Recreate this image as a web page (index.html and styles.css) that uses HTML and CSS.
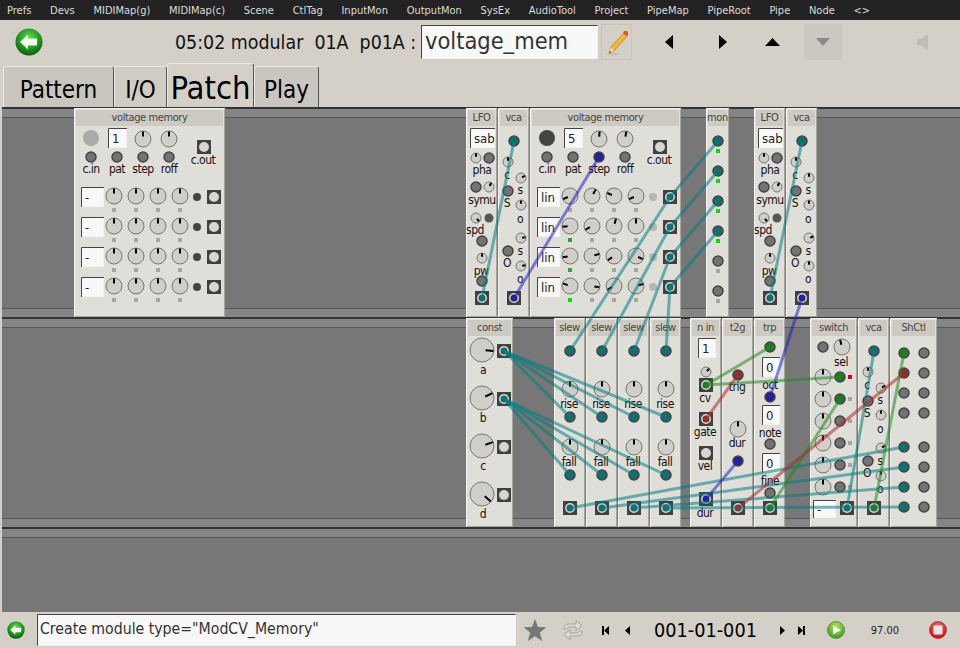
FILE: index.html
```html
<!DOCTYPE html>
<html lang="en">
<head>
    <meta charset="UTF-8">
    <title>modular patch</title>
    <link rel="stylesheet" href="styles.css">
</head>
<body>
    <nav class="menubar">
        <span>Prefs</span><span>Devs</span><span>MIDIMap(g)</span><span>MIDIMap(c)</span><span>Scene</span><span>CtlTag</span><span>InputMon</span><span>OutputMon</span><span>SysEx</span><span>AudioTool</span><span>Project</span><span>PipeMap</span><span>PipeRoot</span><span>Pipe</span><span>Node</span><span>&lt;&gt;</span>
    </nav>

    <div class="toolbar">
        <svg class="icon-back" width="28" height="28" viewBox="0 0 28 28">
            <defs>
                <radialGradient id="green-ball" cx="50%" cy="35%" r="65%">
                    <stop offset="0" stop-color="#6fd85a"/>
                    <stop offset="0.6" stop-color="#1f9a1f"/>
                    <stop offset="1" stop-color="#0a5c12"/>
                </radialGradient>
            </defs>
            <circle cx="14" cy="14" r="13.5" fill="url(#green-ball)"/>
            <path d="M5 14 L13 6.5 L13 10.5 L22 10.5 L22 17.5 L13 17.5 L13 21.5 Z" fill="#f4f8f0"/>
        </svg>
        <div class="title">05:02 modular  01A  p01A :</div>
        <div class="name-box">voltage_mem</div>
        <div class="pencil-btn">
            <svg width="24" height="28" viewBox="0 0 24 28">
                <path d="M20 4 L23 7 L9 23 L4 25 L6 19 Z" fill="#f5b82e" stroke="#a8741a" stroke-width="0.7"/>
                <path d="M19 3 L22 3 L23.5 6 L21 8 L18 5 Z" fill="#e8502a"/>
                <path d="M6 19 L9 23 L4 25 Z" fill="#e9d8b0"/>
                <path d="M4 25 L5 23 L6 24.5 Z" fill="#333"/>
                <path d="M2 26 L14 26" stroke="#b0aca4" stroke-width="1"/>
            </svg>
        </div>
        <svg class="nav-left" width="10" height="14" viewBox="0 0 10 14"><path d="M9 0 V14 L1 7 Z"/></svg>
        <svg class="nav-right" width="10" height="14" viewBox="0 0 10 14"><path d="M1 0 V14 L9 7 Z"/></svg>
        <svg class="nav-up" width="16" height="10" viewBox="0 0 16 10"><path d="M0 9 H15 L7.5 1 Z"/></svg>
        <div class="nav-down">
            <svg width="16" height="10" viewBox="0 0 16 10"><path d="M1 1 H15 L8 9 Z"/></svg>
        </div>
        <svg class="speaker" width="12" height="16" viewBox="0 0 12 16"><path d="M0 5 H4 L11 0 V16 L4 11 H0 Z"/></svg>
    </div>

    <div class="tabs">
        <div class="tab tab-pattern">Pattern</div>
        <div class="tab tab-io">I/O</div>
        <div class="tab tab-patch">Patch</div>
        <div class="tab tab-play">Play</div>
    </div>

    <main class="rack">
        <div class="rack-row"></div>
        <div class="rack-row"></div>
        <div class="rack-row"></div>
        <svg id="patch" class="patch" viewBox="2 107 958 505" width="958" height="505"></svg>
    </main>

    <footer class="statusbar">
        <svg class="icon-back-small" width="18" height="18" viewBox="0 0 28 28">
            <circle cx="14" cy="14" r="13.5" fill="url(#green-ball)"/>
            <path d="M5 14 L13 6.5 L13 10.5 L22 10.5 L22 17.5 L13 17.5 L13 21.5 Z" fill="#f4f8f0"/>
        </svg>
        <div class="cmd-box">Create module type="ModCV_Memory"</div>
        <svg class="star" width="24" height="24" viewBox="0 0 24 24">
            <path d="M12 1 L15 9 L23.5 9.3 L16.8 14.6 L19.2 23 L12 18.2 L4.8 23 L7.2 14.6 L0.5 9.3 L9 9 Z"/>
        </svg>
        <svg class="sync" width="20" height="22" viewBox="0 0 20 22">
            <path d="M1 10 C1 6 3 5 6 5 H13 V1.5 L19 6.5 L13 11.5 V8 H6 C4.5 8 4 9 4 10 Z" fill="#dcdad4" stroke="#a4a29c"/>
            <path d="M19 12 C19 16 17 17 14 17 H7 V20.5 L1 15.5 L7 10.5 V14 H14 C15.5 14 16 13 16 12 Z" fill="#dcdad4" stroke="#a4a29c"/>
        </svg>
        <svg class="tp tp-first" width="8" height="9" viewBox="0 0 8 9"><path d="M0 0 H2 V9 H0 Z M7 0 V9 L2 4.5 Z"/></svg>
        <svg class="tp tp-prev" width="6" height="9" viewBox="0 0 6 9"><path d="M5 0 V9 L0 4.5 Z"/></svg>
        <div class="time">001-01-001</div>
        <svg class="tp tp-next" width="6" height="9" viewBox="0 0 6 9"><path d="M1 0 V9 L6 4.5 Z"/></svg>
        <svg class="tp tp-last" width="8" height="9" viewBox="0 0 8 9"><path d="M6 0 H8 V9 H6 Z M1 0 V9 L6 4.5 Z"/></svg>
        <svg class="play" width="18" height="18" viewBox="0 0 18 18">
            <defs>
                <radialGradient id="lime-ball" cx="50%" cy="30%" r="70%">
                    <stop offset="0" stop-color="#a8e860"/>
                    <stop offset="1" stop-color="#3f9a18"/>
                </radialGradient>
                <radialGradient id="red-ball" cx="50%" cy="30%" r="70%">
                    <stop offset="0" stop-color="#f07070"/>
                    <stop offset="1" stop-color="#c80c14"/>
                </radialGradient>
            </defs>
            <circle cx="9" cy="9" r="8.5" fill="url(#lime-ball)" stroke="#2f7a14" stroke-width="0.6"/>
            <path d="M6 4.5 L14 9 L6 13.5 Z" fill="#f6faf0"/>
        </svg>
        <div class="bpm">97.00</div>
        <svg class="stop" width="18" height="18" viewBox="0 0 18 18">
            <circle cx="9" cy="9" r="8.5" fill="url(#red-ball)" stroke="#9a1010" stroke-width="0.6"/>
            <rect x="4.5" y="4.5" width="9" height="9" rx="1" fill="#e8e6e2"/>
        </svg>
    </footer>

    <script src="rack.js"></script>
</body>
</html>
```

FILE: styles.css
```css
* {
    box-sizing: border-box;
    margin: 0;
    padding: 0;
}

body {
    width: 960px;
    height: 648px;
    overflow: hidden;
    background-color: #d4d0c8;
    font-family: 'DejaVu Sans', sans-serif;
    font-stretch: condensed;
    color: #000;
}

.menubar {
    display: flex;
    align-items: center;
    gap: 18.7px;
    height: 20px;
    padding-left: 7px;
    background-color: #222;
    color: #ddd;
    font-size: 11px;
}

.toolbar {
    display: flex;
    align-items: center;
    height: 43px;
    padding-top: 1px;
}

.icon-back {
    margin-left: 15px;
}

.title {
    margin-left: 132px;
    width: 246px;
    font-size: 19.4px;
    white-space: pre;
    color: #111;
}

.name-box {
    width: 177px;
    height: 34px;
    padding-left: 3px;
    border: 1px solid #f4f2ee;
    border-top-color: #444;
    border-left-color: #444;
    background-color: #f8f8f8;
    color: #333;
    font-size: 23.4px;
    line-height: 30px;
}

.pencil-btn {
    display: flex;
    align-items: center;
    justify-content: center;
    width: 31px;
    height: 36px;
    margin-left: 3px;
    border: 1px solid #c8c4bc;
}

.nav-left {
    margin-left: 32px;
}

.nav-right {
    margin-left: 44px;
}

.nav-up {
    margin-left: 37px;
}

.nav-down {
    display: flex;
    align-items: center;
    justify-content: center;
    width: 38px;
    height: 36px;
    margin-left: 23px;
    background-color: #ccc8c1;
}

.nav-down svg {
    fill: #8c8a84;
}

.speaker {
    margin-left: 75px;
    fill: #c0bdb6;
}

.tabs {
    display: flex;
    align-items: flex-end;
    height: 44px;
    padding-left: 3px;
}

.tab {
    display: flex;
    align-items: center;
    justify-content: center;
    height: 41px;
    padding-top: 5px;
    border-top: 1px solid #ece9e2;
    border-left: 1px solid #ece9e2;
    border-right: 1px solid #555;
    border-radius: 3px 3px 0 0;
    background-color: #c8c6be;
    font-size: 24px;
}

.tab-pattern {
    width: 111px;
}

.tab-io {
    width: 53px;
    background-color: #cfccc4;
}

.tab-patch {
    width: 87px;
    height: 44px;
    padding-top: 4px;
    background-color: #d4d0c8;
    font-size: 32.5px;
}

.tab-play {
    width: 65px;
}

.rack {
    position: relative;
    height: 505px;
    margin-left: 2px;
    overflow: hidden;
    background-color: #777;
}

.rack-row {
    height: 210px;
    background-image: linear-gradient(#333 0, #333 2px, #858585 2px, #858585 10px, #555 10px, #555 11px, #777 11px, #777 201px, #555 201px, #555 202px, #858585 202px);
}

.patch {
    position: absolute;
    left: 0;
    top: 0;
}

.statusbar {
    display: flex;
    align-items: center;
    height: 36px;
}

.icon-back-small {
    margin-left: 7px;
}

.cmd-box {
    width: 479px;
    height: 32px;
    margin-left: 12px;
    padding-left: 2px;
    border: 1px solid #f0eee8;
    border-top-color: #444;
    border-left-color: #444;
    background-color: #f8f8f8;
    color: #333;
    font-size: 15.7px;
    line-height: 28px;
}

.star {
    margin-left: 7px;
    fill: #777;
}

.sync {
    margin-left: 16px;
}

.tp {
    fill: #000;
}

.tp-first {
    margin-left: 19px;
}

.tp-prev {
    margin-left: 15px;
}

.time {
    width: 102px;
    margin-left: 23px;
    font-size: 19.7px;
    text-align: center;
    white-space: nowrap;
}

.tp-next {
    margin-left: 23px;
}

.tp-last {
    margin-left: 12px;
}

.play {
    margin-left: 22px;
}

.bpm {
    width: 30px;
    margin-left: 25px;
    font-size: 11px;
    text-align: center;
    color: #222;
}

.stop {
    margin-left: 29px;
}

/* rack drawing */
.panel {
    fill: #e0ded9;
    stroke: #a8a69f;
}

.panel-edge {
    stroke: #f6f4f0;
}

.head {
    fill: #cdcac2;
}

.head-text {
    fill: #444;
    font-size: 11px;
    letter-spacing: -0.4px;
    text-anchor: middle;
}

.lbl {
    fill: #111;
    font-size: 12px;
    letter-spacing: -0.5px;
    text-anchor: middle;
}

.knob {
    fill: #d0cec9;
    stroke: #77756f;
    stroke-width: 1;
}

.tick {
    stroke: #000;
    stroke-width: 2;
}

.port {
    fill: #737373;
    stroke: #444;
    stroke-width: 1.5;
}

.jack-body {
    fill: #404040;
}

.jack-hole {
    fill: #d8d6d2;
}

.box {
    fill: #f8f8f8;
    stroke: #f4f2ee;
}

.box-shade {
    stroke: #444;
}

.box-text {
    fill: #222;
    font-size: 13px;
}

.sq {
    fill: #a8a6a0;
}

.cable {
    stroke-width: 3;
    stroke-opacity: 0.55;
}

.teal {
    stroke: #008080;
}

.red {
    stroke: #aa2a2a;
}

.green {
    stroke: #1e8c1e;
}

.blue {
    stroke: #2222c0;
}
```

FILE: rack.js
```js
// draws the modules and cables of the patch
const svg = document.getElementById('patch');

const FILL = { teal: '#146e6e', red: '#8f3030', green: '#1f7a24', blue: '#22229a' };

function el(name, attrs, text) {
    const node = document.createElementNS('http://www.w3.org/2000/svg', name);
    for (const key in attrs) node.setAttribute(key, attrs[key]);
    if (text !== undefined) node.textContent = text;
    svg.appendChild(node);
    return node;
}

function panel(x, y, w, h, title) {
    el('rect', { class: 'panel', x: x + 0.5, y: y + 0.5, width: w - 1, height: h - 1 });
    el('path', { class: 'panel-edge', fill: 'none', d: `M${x + 0.5} ${y + h} V${y + 0.5} H${x + w}` });
    el('rect', { class: 'head', x: x + 2, y: y + 2, width: w - 4, height: 16 });
    el('text', { class: 'head-text', x: x + w / 2, y: y + 13 }, title);
}

function label(x, y, text) {
    el('text', { class: 'lbl', x: x, y: y + 4 }, text);
}

function knob(x, y, r, angle) {
    el('circle', { class: 'knob', cx: x, cy: y, r: r });
    const a = (angle || 0) * Math.PI / 180;
    const inner = r > 5 ? r * 0.3 : r * 0.25;
    el('line', {
        class: 'tick',
        x1: x + Math.sin(a) * inner, y1: y - Math.cos(a) * inner,
        x2: x + Math.sin(a) * (r - 0.5), y2: y - Math.cos(a) * (r - 0.5),
    });
}

function port(x, y, color) {
    const node = el('circle', { class: 'port', cx: x, cy: y, r: 5 });
    if (color) node.style.fill = FILL[color];
}

function jack(x, y, color) {
    el('rect', { class: 'jack-body', x: x - 7, y: y - 7, width: 14, height: 14 });
    el('circle', { class: 'jack-hole', cx: x, cy: y, r: 5 });
    if (color) el('circle', { cx: x, cy: y, r: 3.5, fill: FILL[color] });
}

function box(x, y, w, h, text) {
    el('rect', { class: 'box', x: x + 0.5, y: y + 0.5, width: w - 1, height: h - 1 });
    el('path', { class: 'box-shade', fill: 'none', d: `M${x + 0.5} ${y + h} V${y + 0.5} H${x + w}` });
    el('text', { class: 'box-text', x: x + 4, y: y + h / 2 + 5 }, text);
}

function square(x, y, fill) {
    const node = el('rect', { class: 'sq', x: x - 2, y: y - 2, width: 4, height: 4 });
    if (fill) node.style.fill = fill;
}

function led(x, y, r, fill) {
    el('circle', { cx: x, cy: y, r: r, fill: fill });
}

function voltageMemory(x, opts) {
    panel(x, 108, 151, 209, 'voltage memory');
    led(x + 17, 138, 8, opts.led);
    box(x + 34, 128, 19, 20, opts.step);
    knob(x + 69, 139, 8, opts.top[0]);
    knob(x + 95, 139, 8, opts.top[1]);
    jack(x + 130, 147);
    label(x + 129, 160, 'c.out');
    ['c.in', 'pat', 'step', 'roff'].forEach((name, i) => {
        port(x + 17 + i * 26, 157, name === 'step' ? opts.stepCable : null);
        label(x + 17 + i * 26, 169, name);
    });
    [197, 227, 257, 287].forEach((y, row) => {
        box(x + 7, y - 10, 23, 20, opts.mode);
        [0, 1, 2, 3].forEach(col => {
            const kx = x + 40 + col * 22;
            knob(kx, y - 1, 8, opts.knobs[row][col]);
            square(kx, y + 13, opts.greens && col === 0 ? opts.greens[row] : null);
        });
        led(x + 123, y, 4, opts.ledRow);
        jack(x + 140, y, opts.outCable);
    });
}

function lfo(x, spd) {
    panel(x, 108, 31, 209, 'LFO');
    box(x + 4, 128, 25, 20, 'sab');
    knob(x + 10, 158, 5, 0);
    port(x + 23, 158);
    label(x + 16, 170, 'pha');
    port(x + 10, 187);
    knob(x + 23, 187, 5, 30);
    label(x + 16, 200, 'symu');
    knob(x + 10, 218, 5, spd);
    led(x + 23, 218, 4.5, '#555');
    label(x + 9, 230, 'spd');
    port(x + 16, 241);
    knob(x + 16, 258, 5, 0);
    label(x + 15, 271, 'pw');
    port(x + 16, 281);
    jack(x + 16, 298, 'teal');
}

function vca(x, dy, opts) {
    panel(x, 108 + dy, 31, 209, 'vca');
    port(x + 16, 141 + dy, 'teal');
    knob(x + 10, 162 + dy, 5, 0);
    label(x + 9, 175 + dy, 'c');
    knob(x + 23, 178 + dy, 5, opts.s1);
    port(x + 10, 191 + dy);
    label(x + 9, 203 + dy, 'S');
    label(x + 22, 190 + dy, 's');
    knob(x + 23, 205 + dy, 5, 0);
    label(x + 22, 219 + dy, 'o');
    knob(x + 23, 238 + dy, 5, opts.s2);
    port(x + 10, 251 + dy);
    label(x + 9, 263 + dy, 'O');
    label(x + 22, 251 + dy, 's');
    knob(x + 23, 266 + dy, 5, opts.o2);
    label(x + 22, 279 + dy, 'o');
    jack(x + 16, 298 + dy, opts.out);
}

function slew(x) {
    panel(x, 318, 31, 209, 'slew');
    port(x + 16, 351, 'teal');
    knob(x + 16, 389, 8, 0);
    label(x + 15, 404, 'rise');
    port(x + 16, 417, 'teal');
    knob(x + 16, 447, 8, 0);
    label(x + 15, 462, 'fall');
    port(x + 16, 475, 'teal');
    jack(x + 16, 508, 'teal');
}

function cable(x1, y1, x2, y2, color) {
    el('line', { class: 'cable ' + color, x1: x1, y1: y1, x2: x2, y2: y2 });
}

// top row
voltageMemory(74, {
    led: '#aaa', step: '1', top: [0, 0], mode: '-', ledRow: '#444',
    knobs: [[0, 0, 0, 0], [0, 0, 0, 0], [0, 0, 0, 0], [0, 0, 0, 0]],
});
lfo(466, 135);
vca(498, 0, { s1: 60, s2: 80, o2: 80, out: 'blue' });
voltageMemory(530, {
    led: '#444', step: '5', top: [5, 10], mode: 'lin', ledRow: '#b8b6b0', stepCable: 'blue', outCable: 'teal',
    knobs: [[245, 30, 295, 245], [265, 240, 15, 0], [260, 75, 235, 115], [290, 100, 240, 75]],
    greens: ['#a8a6a0', '#3a9a3a', '#2eaa2e', '#00dd00'],
});

panel(706, 108, 23, 209, 'mon');
[141, 171, 201, 231, 261, 291].forEach((y, i) => {
    port(718, y, i < 4 ? 'teal' : null);
    square(718, y + 10, i < 4 ? '#00e000' : null);
});

lfo(754, 135);
vca(786, 0, { s1: 0, s2: 70, o2: 0, out: 'blue' });

// second row
panel(466, 318, 47, 209, 'const');
[[350, 'a', 95], [398, 'b', 65], [446, 'c', 70], [494, 'd', 130]].forEach((row, i) => {
    knob(482, row[0], 12, row[2]);
    label(483, row[0] + 20, row[1]);
    jack(504, row[0] + 1, i < 2 ? 'teal' : null);
});

[554, 586, 618, 650].forEach(slew);

panel(690, 318, 31, 209, 'n in');
box(698, 338, 18, 20, '1');
knob(706, 372, 5, 45);
jack(706, 385, 'green');
label(705, 398, 'cv');
jack(706, 419, 'red');
label(705, 432, 'gate');
jack(706, 453);
label(705, 466, 'vel');
jack(706, 499, 'blue');
label(705, 513, 'dur');

panel(722, 318, 31, 209, 't2g');
port(738, 375, 'red');
label(737, 387, 'trig');
knob(738, 429, 8, 0);
label(737, 443, 'dur');
port(738, 461, 'blue');
jack(738, 508, 'red');

panel(754, 318, 31, 209, 'trp');
port(770, 347, 'green');
box(762, 357, 18, 20, '0');
label(770, 385, 'oct');
port(770, 397, 'blue');
box(762, 405, 18, 20, '0');
label(770, 433, 'note');
port(770, 444);
box(762, 453, 18, 20, '0');
label(770, 481, 'fine');
port(770, 493);
jack(770, 508, 'green');

panel(810, 318, 47, 209, 'switch');
port(823, 347);
knob(842, 347, 8, 345);
label(841, 362, 'sel');
[377, 399, 421, 443, 465, 487].forEach((y, i) => {
    knob(823, y, 8, 0);
    port(840, y, i < 2 ? 'green' : null);
    square(850, y, i === 0 ? '#e00000' : null);
});
box(813, 500, 23, 18, '-');
jack(847, 508, 'teal');

vca(858, 210, { s1: 60, s2: 60, o2: 0, out: 'green' });

panel(890, 318, 47, 209, 'ShCtl');
[353, 373, 393, 413, 447, 467, 487, 507].forEach((y, i) => {
    const color = i === 0 ? 'green' : i === 1 ? 'red' : i > 3 ? 'teal' : null;
    port(904, y, color);
    port(924, y);
});

// cables go on top of everything
cable(482, 298, 514, 141, 'teal');
cable(770, 298, 802, 141, 'teal');
cable(514, 298, 599, 157, 'blue');
cable(802, 298, 770, 397, 'blue');
[197, 227, 257, 287].forEach((y, i) => {
    cable(670, y, 718, 141 + i * 30, 'teal');
    cable(670, y, 570 + i * 32, 351, 'teal');
});
[570, 602, 634, 666].forEach((x, i) => {
    cable(504, 351, x, 417, 'teal');
    cable(504, 399, x, 475, 'teal');
    cable(x, 508, 904, 447 + i * 20, 'teal');
});
cable(847, 508, 874, 351, 'teal');
cable(874, 508, 904, 353, 'green');
cable(706, 385, 770, 347, 'green');
cable(706, 385, 840, 377, 'green');
cable(770, 508, 840, 399, 'green');
cable(706, 419, 738, 375, 'red');
cable(738, 508, 904, 373, 'red');
cable(706, 499, 738, 461, 'blue');
```
